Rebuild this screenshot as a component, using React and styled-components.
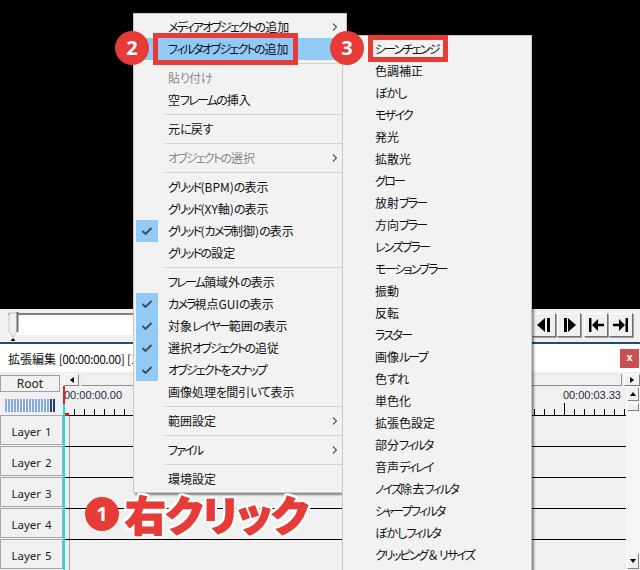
import React from 'react';
import styled, { createGlobalStyle } from 'styled-components';

const Global = createGlobalStyle`
  html, body { margin: 0; padding: 0; background: #000; }
  * { box-sizing: border-box; }
`;

const JP = `"Noto Sans CJK JP", "Noto Sans", sans-serif`;

const Page = styled.div`
  position: relative;
  width: 640px;
  height: 570px;
  overflow: hidden;
  background: #f0f0f0;
  font-family: "Noto Sans", ${JP};
  color: #111;
`;
const Preview = styled.div`height: 309px; background: #000;`;
const PlayerBar = styled.div`
  height: 35px;
  display: flex;
  padding: 4px 7px 0 8px;
  background: #f0f0f0;
  border-bottom: 2px solid #1c4f68;
`;
const Slider = styled.div`
  position: relative;
  width: 524px;
  height: 22px;
  border-top: 2px solid #808080;
  background: #fff;
`;
const Handle = styled.svg`position: absolute; left: 0; top: -3px;`;
const Buttons = styled.div`display: flex; gap: 1px;`;
const PlayBtn = styled.div`
  width: 24px;
  height: 24px;
  margin-right: ${p => p.$gap || 0}px;
  display: flex;
  align-items: center;
  justify-content: center;
  background: #f0f0f0;
  border: 1px solid;
  border-color: #fff #707070 #707070 #fff;
  box-shadow: 1px 1px 0 #a0a0a0;
`;
const TitleBar = styled.div`
  height: 28px;
  display: flex;
  align-items: center;
  justify-content: space-between;
  padding: 0 1px 0 8px;
  background: #fff;
  font: 12px ${JP};
  font-feature-settings: "palt";
`;
const TimeStamp = styled.span`letter-spacing: -.45px;`;
const CloseBtn = styled.div`
  width: 19px;
  height: 19px;
  background: #c75050;
  color: #fff;
  font: bold 11px/17px "Liberation Sans", sans-serif;
  text-align: center;
`;
const Timeline = styled.div`
  position: relative;
  height: 198px;
  display: flex;
  background: #f0f0f0;
`;
const Sidebar = styled.div`
  width: 64px;
  flex: none;
  padding-top: 3px;
  display: flex;
  flex-direction: column;
  align-items: flex-start;
`;
const Bevel = styled.div`
  width: 60px;
  height: 17px;
  display: flex;
  align-items: center;
  justify-content: center;
  border: 1px solid #a0a0a0;
  background: #f0f0f0;
  font: 12px "Noto Sans", sans-serif;
  color: #222;
`;
const ZoomBar = styled.div`
  margin: 7px 0 3px 5px;
  height: 13px;
  display: flex;
  gap: 1px;
`;
const ZoomTick = styled.i`
  display: block;
  width: 2px;
  background: ${p => (p.$on ? '#86ace4' : '#2c3c84')};
`;
const LayerBtn = styled(Bevel)`
  width: 63px;
  height: 30px;
  margin-bottom: 1px;
  padding-top: 3px;
  border: 1px solid #a6a6a6;
  font-size: 11.5px;
  word-spacing: 1px;
`;
const Main = styled.div`flex: 1; display: flex; flex-direction: column; padding-top: 2px; min-width: 0;`;
const HScroll = styled.div`height: 12px; display: flex; gap: 2px;`;
const ScrollBtn = styled.div`
  width: ${p => p.$w || 14}px;
  height: ${p => p.$h || 12}px;
  display: flex;
  align-items: center;
  justify-content: center;
  background: #f0f0f0;
  border: 1px solid;
  border-color: #fff #808080 #808080 #fff;
  flex: none;
`;
const ScrollThumb = styled.div`
  flex: 1;
  background: #f0f0f0;
  border: 1px solid;
  border-color: #e4e4e4 #909090 #909090 #e4e4e4;
`;
const Body = styled.div`flex: 1; display: flex; min-height: 0;`;
const TrackArea = styled.div`width: 562px; flex: none;`;
const Ruler = styled.div`height: 30px; display: flex; flex-direction: column;`;
const TimeLabels = styled.div`
  height: 17px;
  padding: 1px 5px 0 0;
  display: flex;
  justify-content: space-between;
  font: 11px/16px "Liberation Sans", sans-serif;
  color: #1f2a44;
`;
const Tracks = styled.div`
  background: linear-gradient(#a4a4a4, #a4a4a4) 5px 0 / 1px 100% no-repeat;
`;
const TrackRow = styled.div`
  height: 31px;
  border-bottom: 1px solid ${p => (p.$last ? 'transparent' : '#000')};
`;
const VScroll = styled.div`
  flex: 1;
  padding: 1px;
  display: flex;
  flex-direction: column;
  gap: 2px;
  background: #fff repeating-conic-gradient(#ededed 0 25%, #fff 0 50%) 0 0 / 2px 2px;
`;
const VSpacer = styled.div`flex: 1;`;
const Playhead = styled.div`
  position: absolute;
  left: 63px;
  top: 14px;
  bottom: 0;
  width: 2px;
  background: linear-gradient(#e02020 0 18px, #22dde0 18px);
`;

const Menu = styled.div`
  position: absolute;
  left: ${p => p.$left}px;
  top: ${p => p.$top}px;
  width: ${p => p.$width}px;
  padding: 2px 2px ${p => p.$bottom || 2}px;
  background: #f2f2f2;
  border: 1px solid #c8c8c8;
  box-shadow: 2px 2px 2px rgba(0, 0, 0, .45);
  font: 12px ${JP};
  color: #111;
`;
const Row = styled.div`
  position: relative;
  height: 22px;
  display: flex;
  align-items: center;
  padding-left: ${p => p.$pad}px;
  padding-bottom: 2px;
  white-space: nowrap;
  background: ${p => (p.$active ? '#91c9f7' : 'transparent')};
  color: ${p => (p.$off ? '#8a8a8a' : '#111')};
`;
const Kana = styled.span`
  font-feature-settings: "palt";
  letter-spacing: ${p => (p.$hira ? '-.9px' : '-1.8px')};
`;
const CheckBox = styled.span`
  position: absolute;
  left: 0;
  top: 0;
  width: 22px;
  height: 22px;
  display: flex;
  align-items: center;
  justify-content: center;
  background: #91c9f7;
`;
const Arrow = styled.svg`position: absolute; right: 6px; top: 7px;`;
const Sep = styled.div`
  height: 7px;
  margin-left: 28px;
  display: flex;
  align-items: center;
  &::after { content: ""; flex: 1; height: 1px; background: #d4d4d4; }
`;

const Circle = styled.div`
  position: absolute;
  left: ${p => p.$x - 17}px;
  top: ${p => p.$y - 17}px;
  width: 34px;
  height: 34px;
  border-radius: 50%;
  background: #e63b37;
  color: #fff;
  font: bold 20px/34px "Noto Sans", sans-serif;
  text-align: center;
`;
const RedBox = styled.div`
  position: absolute;
  left: ${p => p.$x}px;
  top: ${p => p.$y}px;
  width: ${p => p.$w}px;
  height: ${p => p.$h}px;
  border: 5px solid #e63b37;
`;
const BigLabel = styled.div`
  position: absolute;
  left: 125px;
  top: 484px;
  font: 900 41px/58px ${JP};
  font-feature-settings: "palt";
  letter-spacing: -.3px;
  color: #e63b37;
  -webkit-text-stroke: 1.4px #e63b37;
  filter: drop-shadow(2px 0 0 #fff) drop-shadow(-2px 0 0 #fff) drop-shadow(0 2px 0 #fff) drop-shadow(0 -2px 0 #fff);
  white-space: nowrap;
`;

const MAIN = [
  { t: 'メディアオブジェクトの追加', a: 1 },
  { t: 'フィルタオブジェクトの追加', active: 1 },
  'sep',
  { t: '貼り付け', off: 1 },
  { t: '空フレームの挿入' },
  'sep',
  { t: '元に戻す' },
  'sep',
  { t: 'オブジェクトの選択', off: 1, a: 1 },
  'sep',
  { t: 'グリッド(BPM)の表示' },
  { t: 'グリッド(XY軸)の表示' },
  { t: 'グリッド(カメラ制御)の表示', c: 1 },
  { t: 'グリッドの設定' },
  'sep',
  { t: 'フレーム領域外の表示' },
  { t: 'カメラ視点GUIの表示', c: 1 },
  { t: '対象レイヤー範囲の表示', c: 1 },
  { t: '選択オブジェクトの追従', c: 1 },
  { t: 'オブジェクトをスナップ', c: 1 },
  { t: '画像処理を間引いて表示' },
  'sep',
  { t: '範囲設定', a: 1 },
  'sep',
  { t: 'ファイル', a: 1 },
  'sep',
  { t: '環境設定' },
];
const SUB = ['シーンチェンジ', '色調補正', 'ぼかし', 'モザイク', '発光', '拡散光', 'グロー', '放射ブラー', '方向ブラー', 'レンズブラー', 'モーションブラー', '振動', '反転', 'ラスター', '画像ループ', '色ずれ', '単色化', '拡張色設定', '部分フィルタ', '音声ディレイ', 'ノイズ除去フィルタ', 'シャープフィルタ', 'ぼかしフィルタ', 'クリッピング＆リサイズ'];

// Katakana and hiragana are set narrower than kanji, as in the Windows menu font.
const Label = ({ text }) => (
  <span>
    {text.split(/([ァ-ヿ]+|[ぁ-ゟ]+)/).filter(Boolean).map((part, i) => {
      if (/^[ァ-ヿ]/.test(part)) return <Kana key={i}>{part}</Kana>;
      if (/^[ぁ-ゟ]/.test(part)) return <Kana key={i} $hira>{part}</Kana>;
      return part;
    })}
  </span>
);

const Chevron = () => (
  <Arrow width="6" height="8" viewBox="0 0 6 8">
    <path d="M1 .5 4.5 4 1 7.5" fill="none" stroke={'#555'} strokeWidth="1.1" />
  </Arrow>
);
const Tick = () => (
  <svg width="12" height="10" viewBox="0 0 12 10">
    <path d="M1.5 5 4.5 8 10.5 2" fill="none" stroke="#3c4a58" strokeWidth="1.8" />
  </svg>
);
const Tri = ({ d }) => (
  <svg width="8" height="6" viewBox="0 0 8 6"><path d={d} fill="#000" /></svg>
);

const tickX = Array.from({ length: 56 }, (_, i) => 10 + i * 10);

export default function App() {
  return (
    <Page>
      <Global />
      <Preview />
      <PlayerBar>
        <Slider>
          <Handle width="12" height="30" viewBox="0 0 12 30">
            <path d="M1 1H9.500V19L5 25 1 20Z" fill="#f0f0f0" stroke="#c0c0c0" />
            <path d="M9.500 0V20" stroke="#707070" strokeWidth="2" />
            <path d="M5 26 7.500 29H2.500Z" fill="#000" />
          </Handle>
        </Slider>
        <Buttons>
          <PlayBtn>
            <svg width="16" height="16" viewBox="0 0 16 16"><path d="M1 8 9 1V15Z M11 1H14V15H11Z" fill="#000" /></svg>
          </PlayBtn>
          <PlayBtn $gap={2}>
            <svg width="16" height="16" viewBox="0 0 16 16"><path d="M3 1H6V15H3Z M7 1 15 8 7 15Z" fill="#000" /></svg>
          </PlayBtn>
          <PlayBtn>
            <svg width="18" height="16" viewBox="0 0 18 16"><path d="M2 1H4.500V15H2Z M5 8 11 2V6.800H17V9.200H11V14Z" fill="#000" /></svg>
          </PlayBtn>
          <PlayBtn>
            <svg width="18" height="16" viewBox="0 0 18 16"><path d="M13.500 1H16V15H13.500Z M13 8 7 2V6.800H1V9.200H7V14Z" fill="#000" /></svg>
          </PlayBtn>
        </Buttons>
      </PlayerBar>
      <TitleBar>
        <span>拡張編集 <TimeStamp>[00:00:00.00]</TimeStamp> [1/1]</span>
        <CloseBtn>x</CloseBtn>
      </TitleBar>
      <Timeline>
        <Sidebar>
          <Bevel>Root</Bevel>
          <ZoomBar>
            {Array.from({ length: 17 }, (_, i) => <ZoomTick key={i} $on={i < 15} />)}
          </ZoomBar>
          {[1, 2, 3, 4, 5].map(n => <LayerBtn key={n}>Layer {n}</LayerBtn>)}
        </Sidebar>
        <Main>
          <HScroll>
            <ScrollBtn $w={15}><Tri d="M2 3 6 0V6Z" /></ScrollBtn>
            <ScrollThumb />
            <ScrollBtn $w={16}><Tri d="M6 3 2 0V6Z" /></ScrollBtn>
          </HScroll>
          <Body>
            <TrackArea>
              <Ruler>
                <TimeLabels><span>00:00:00.00</span><span>00:00:03.33</span></TimeLabels>
                <svg width="562" height="13" viewBox="0 0 562 13">
                  {tickX.map(x => (
                    <rect key={x} x={x} y={x === 500 ? 0 : 6} width="1" height={x === 500 ? 12 : 6} fill="#000" />
                  ))}
                  <rect x="0" y="12" width="562" height="1" fill="#000" />
                  <rect x="1" y="10" width="4" height="3" fill="#e01010" />
                </svg>
              </Ruler>
              <Tracks>
                {[1, 2, 3, 4, 5].map(n => <TrackRow key={n} $last={n === 5} />)}
              </Tracks>
            </TrackArea>
            <VScroll>
              <ScrollBtn $w={12} $h={14}><Tri d="M4 1 7 5H1Z" /></ScrollBtn>
              <ScrollBtn $w={12} $h={8} />
              <VSpacer />
              <ScrollBtn $w={12} $h={16}><Tri d="M4 5 1 1H7Z" /></ScrollBtn>
            </VScroll>
          </Body>
        </Main>
        <Playhead />
      </Timeline>

      <Menu $left={133} $top={13} $width={214}>
        {MAIN.map((m, i) => m === 'sep' ? <Sep key={i} /> : (
          <Row key={i} $pad={32} $active={m.active} $off={m.off}>
            {m.c && <CheckBox><Tick /></CheckBox>}
            <Label text={m.t} />
            {m.a && <Chevron />}
          </Row>
        ))}
      </Menu>
      <Menu $left={342} $top={35} $width={190} $bottom={20}>
        {SUB.map(s => <Row key={s} $pad={30}><Label text={s} /></Row>)}
      </Menu>

      <RedBox $x={153} $y={33} $w={145} $h={32} />
      <RedBox $x={368} $y={35} $w={80} $h={27} />
      <Circle $x={132} $y={48}>2</Circle>
      <Circle $x={347} $y={48}>3</Circle>
      <Circle $x={102} $y={514}>1</Circle>
      <BigLabel>右クリック</BigLabel>
    </Page>
  );
}
